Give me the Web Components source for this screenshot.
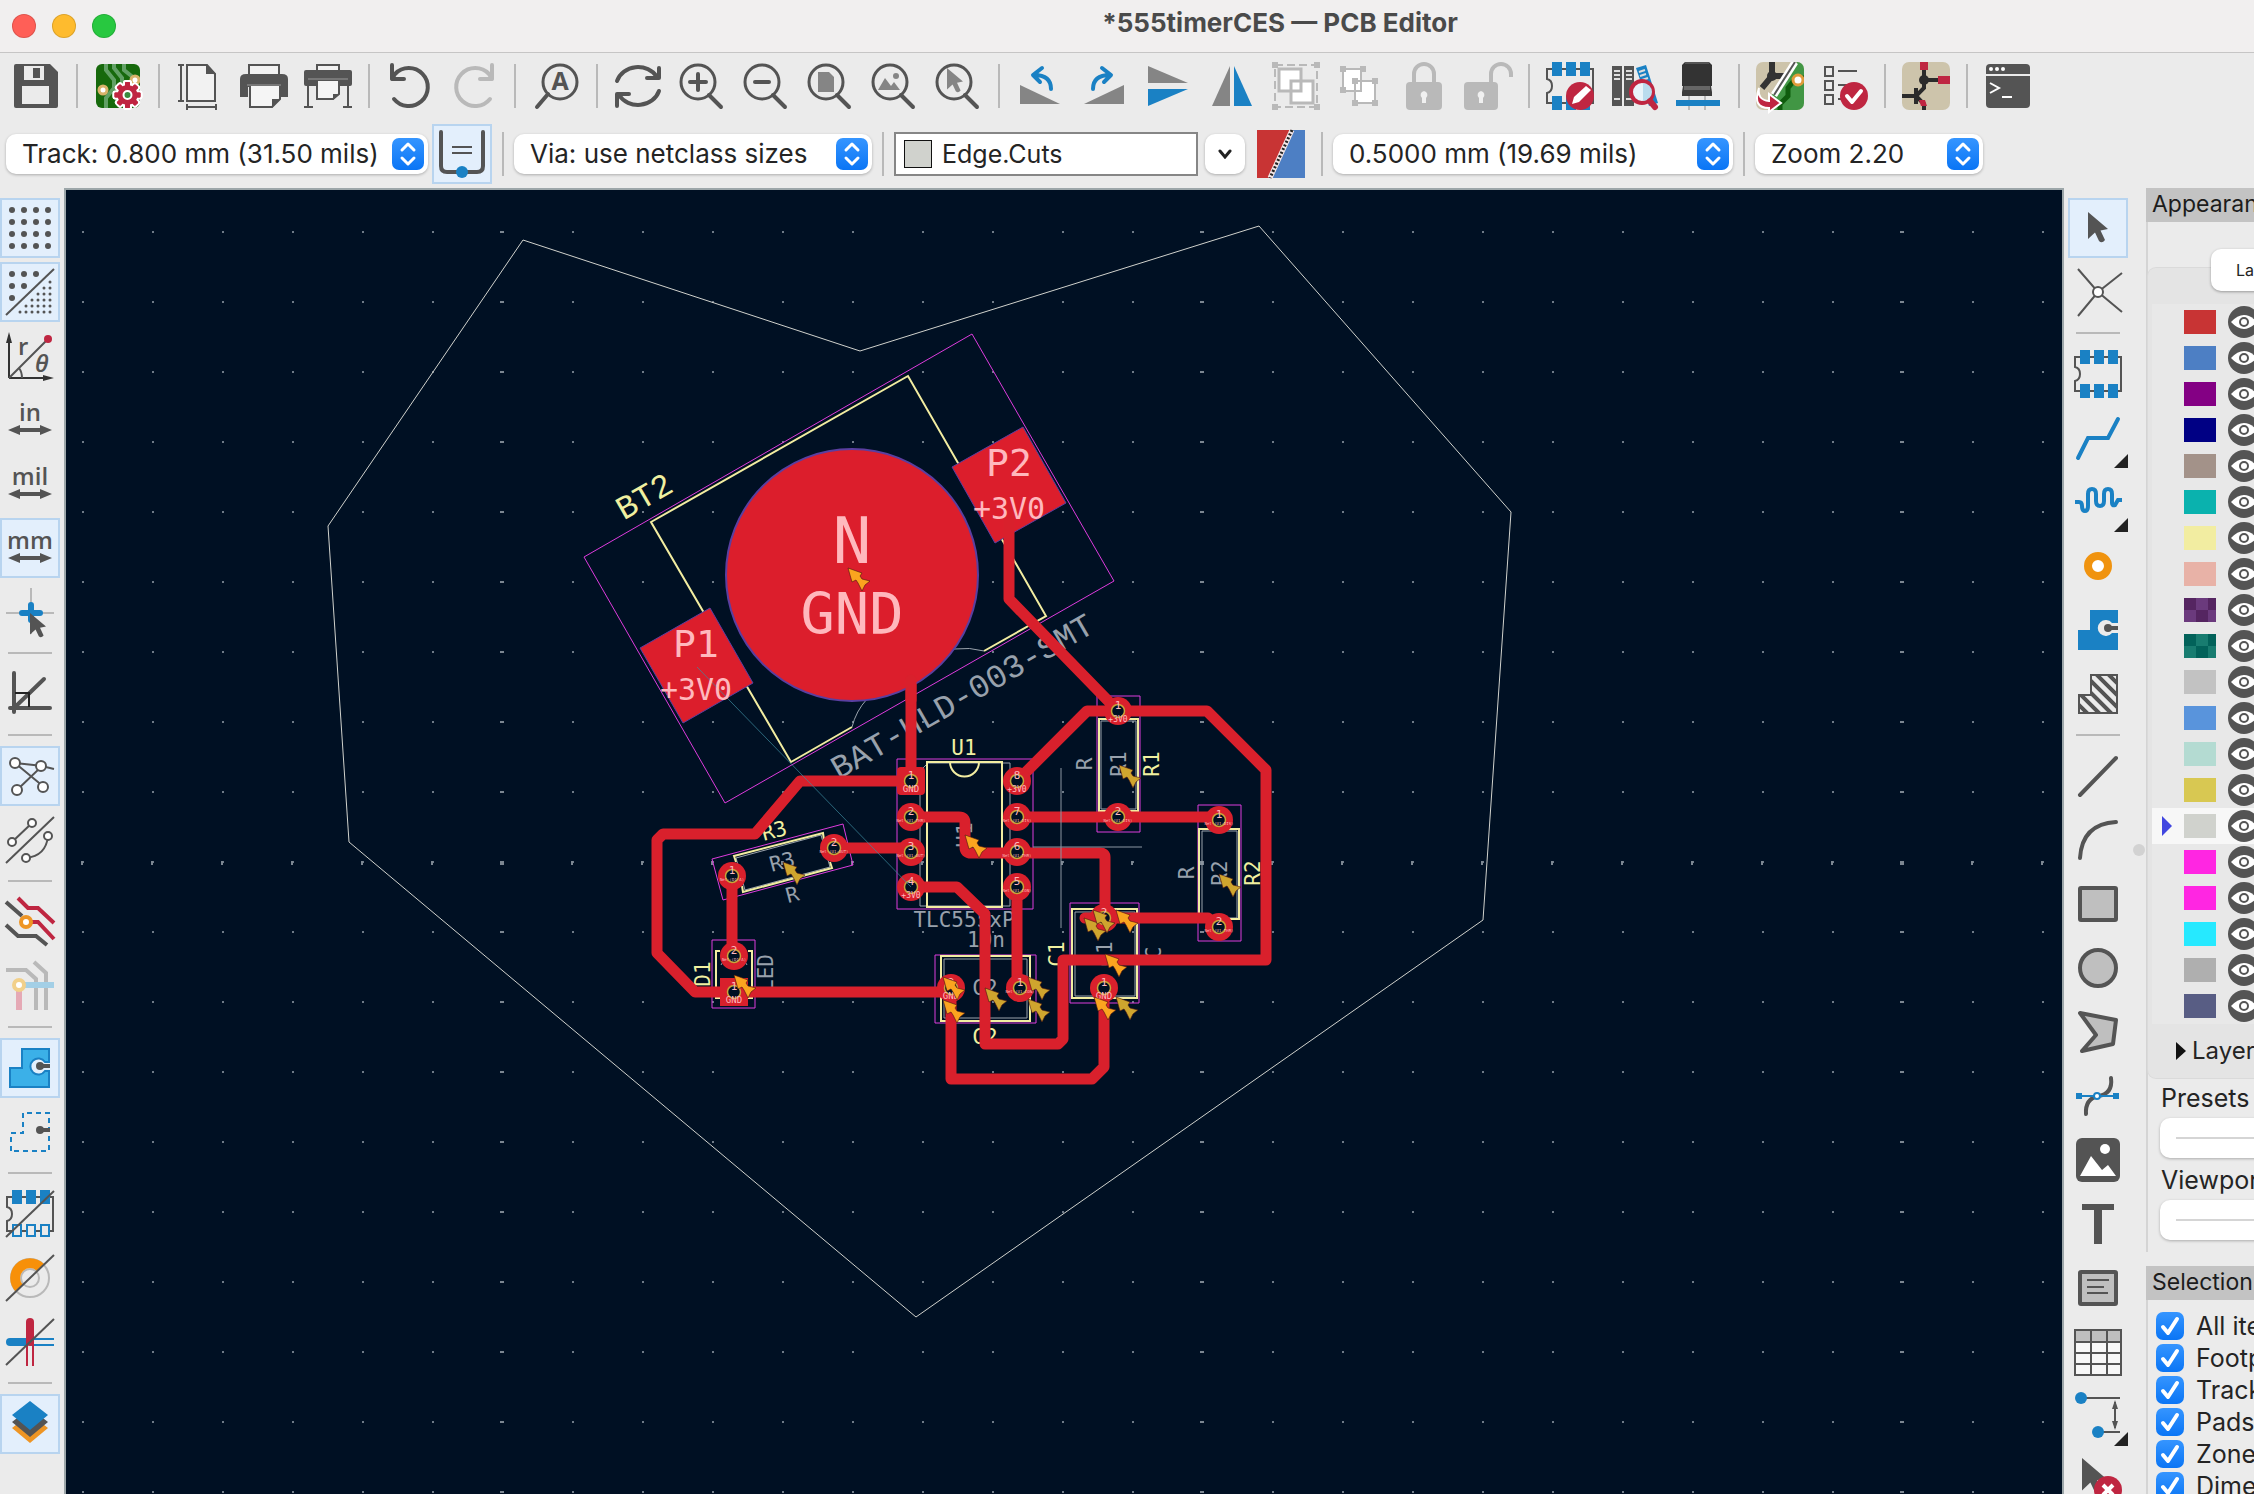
<!DOCTYPE html>
<html lang="en">
<head>
<meta charset="utf-8">
<title>*555timerCES — PCB Editor</title>
<style>
  html, body { margin: 0; height: 100%; }
  body { overflow: hidden; background: #ebebeb; color: #242424; font: 25px/32px Inter, "Liberation Sans", sans-serif; }
</style>
</head>
<body>
<pcb-window></pcb-window>
<script>
const D = '#545454', B = '#1a81c4', R = '#bf2641', L = '#b9b9b9', M = '#858585';
const lens = inner => `<circle cx="20" cy="20" r="17" fill="none" stroke="${D}" stroke-width="3"/><path d="M31 33L43 45" stroke="${D}" stroke-width="4" stroke-linecap="round"/>${inner}`;
const unit = t => `<text x="24" y="25" text-anchor="middle" font-family="Open Sans" font-weight="600" font-size="24" fill="${D}">${t}</text><path d="M12 34H36" stroke="${D}" stroke-width="4"/><path d="M2 34l12-5v10zM46 34l-12-5v10z" fill="${D}"/>`;
const grid = (n, step, x0, y0, r, keep) => { let s = ''; for (let i = 0; i < n; i++) for (let j = 0; j < n; j++) if (keep(i, j)) s += `<circle cx="${x0 + i * step}" cy="${y0 + j * step}" r="${r}" fill="${D}"/>`; return s; };
const slash = `<path d="M0 47L48 1" stroke="${D}" stroke-width="2"/>`;
const corner = `<path d="M60 46v14H46z" fill="#222"/>`;
const chip = low => `<path d="M1 7H47V41H1V31q5-1 5-7t-5-7z" fill="none" stroke="${D}" stroke-width="2"/><path d="M6 0h10v14H6zM20 0h10v14H20zM34 0h10v14H34z" fill="${B}"/>${low ? `<path d="M6 34h10v14H6zM20 34h10v14H20zM34 34h10v14H34z" fill="${B}"/>` : `<path d="M7 35h8v11H7zM21 35h8v11h-8zM35 35h8v11h-8z" fill="#ebebeb" stroke="${B}" stroke-width="2"/>`}`;
const cursor = (x, y, f, s) => `<path transform="translate(${x} ${y}) scale(${s})" d="M0 0V27L7 20.500 11 29q3 3 6-1L12.500 18.500 20 17z" fill="${f}"/>`;
const noteBox = `<rect x="6" y="8" width="36" height="32" rx="1" fill="#bfbfbf" stroke="${D}" stroke-width="4"/>`;
const gear = (() => { let p = ''; for (let i = 0; i < 8; i++) p += `<rect x="31" y="20" width="5" height="26" rx="1" transform="rotate(${i * 22.5 * 2} 33.5 33)"/>`; return p; })();
const zonePath = 'M4 43V24H16V5H43V18H39A8 8 0 1 0 39 27H43V43z';

const ICONS = {
  save: `<path d="M2 4q0-2 2-2h34l8 8v34q0 2-2 2H4q-2 0-2-2z" fill="${D}"/><path d="M12 4h20v14H12zM10 24h27v18H10z" fill="#ebebeb"/><path d="M21 6h7v10h-7z" fill="${D}"/>`,
  setup: `<clipPath id="c"><rect x="2" y="2" width="44" height="44" rx="6"/></clipPath><g clip-path="url(#c)"><path d="M2 2h44v44H2z" fill="#16690c"/><path d="M12 0v8l8 10v8l-8 10v12M20 0v6l8 10v10M30 0v8l10 8" fill="none" stroke="#61a065" stroke-width="4"/><circle cx="9" cy="28" r="4" fill="#fff" stroke="#d9b36a" stroke-width="3"/><circle cx="41" cy="18" r="4" fill="#fff" stroke="#d9b36a" stroke-width="3"/></g><g fill="#fff" stroke="#fff" stroke-width="4">${gear}</g><g fill="${R}">${gear}<circle cx="33.500" cy="33" r="10"/></g><circle cx="33.500" cy="33" r="4" fill="#3a8a3e" stroke="#fff" stroke-width="2"/>`,
  page: `<path d="M11 3H31L39 12V39H11z" fill="#f2f2f2" stroke="${D}" stroke-width="2"/><path d="M30 2L40 12H30z" fill="${D}"/><path d="M5 3V39M2 3h6M2 39h6M11 45H40M11 42v6M40 42v6" stroke="${D}" stroke-width="2"/>`,
  print: `<path d="M9 14V3H39V14" fill="#f2f2f2" stroke="${D}" stroke-width="2"/><path d="M0 35V17q0-5 6-5H42q6 0 6 5V35H40V25H8V35z" fill="${D}"/><path d="M10 24H40V37L32 45H10z" fill="#f5f5f5"/><path d="M10 24V45H32L40 37V24" fill="none" stroke="${D}" stroke-width="2"/><path d="M40 37L32 46V37z" fill="${D}"/><path d="M7 23H41" stroke="#777" stroke-width="2"/>`,
  plot: `<path d="M13 9V3H35V9" fill="#f2f2f2" stroke="${D}" stroke-width="2"/><rect y="8" width="48" height="16" rx="2" fill="${D}"/><path d="M4 24V45M44 24V45M0 45H9M39 45H48" stroke="${D}" stroke-width="2"/><path d="M13 18H35V32L29 37H13z" fill="#f5f5f5" stroke="${D}" stroke-width="2"/><path d="M35 32H29V38z" fill="${D}"/><path d="M4 17H44" stroke="#777" stroke-width="2"/>`,
  undo: `<path d="M8 37A19 19 0 1 0 9 12L6 17M6 3V17L18 17" fill="none" stroke="${D}" stroke-width="4" stroke-linejoin="round" stroke-linecap="round"/>`,
  redo: `<path d="M40 37A19 19 0 1 1 39 12L42 17M42 3V17L30 17" fill="none" stroke="${L}" stroke-width="4" stroke-linejoin="round" stroke-linecap="round"/>`,
  find: `<circle cx="28" cy="20" r="17" fill="none" stroke="${D}" stroke-width="3"/><path d="M16 32L5 45" stroke="${D}" stroke-width="4" stroke-linecap="round"/><text x="28" y="28" text-anchor="middle" font-family="Open Sans" font-weight="700" font-size="25" fill="${D}">A</text>`,
  refresh: `<path d="M3 19A22 20 0 0 1 43 15M45 6V16H33M45 29A22 20 0 0 1 5 33M3 44V32H15" fill="none" stroke="${D}" stroke-width="4" stroke-linejoin="round" stroke-linecap="round"/>`,
  zoomIn: lens(`<path d="M20 12V28M12 20H28" stroke="${D}" stroke-width="4" stroke-linecap="round"/>`),
  zoomOut: lens(`<path d="M13 20H27" stroke="${D}" stroke-width="4" stroke-linecap="round"/>`),
  zoomPage: lens(`<path d="M12 10H23L28 15V30H12z" fill="${M}"/>`),
  zoomObj: lens(`<path d="M8 28L15 16 21 24 24 20 30 28z" fill="${M}"/><circle cx="26" cy="14" r="3" fill="${M}"/>`),
  zoomSel: lens(cursor(13, 6, M, .8)),
  ccw: `<path d="M4 23L44 42H4z" fill="${M}"/><path d="M35 27Q35 13 18 13M26 6L17 13 24 20" fill="none" stroke="${B}" stroke-width="4" stroke-linecap="round" stroke-linejoin="round"/>`,
  cw: `<path d="M44 23L4 42H44z" fill="${M}"/><path d="M13 27Q13 13 30 13M22 6L31 13 24 20" fill="none" stroke="${B}" stroke-width="4" stroke-linecap="round" stroke-linejoin="round"/>`,
  flipV: `<path d="M4 4L44 21H4z" fill="${M}"/><path d="M4 27H44L4 44z" fill="${B}"/>`,
  flipH: `<path d="M22 4V44H4z" fill="${M}"/><path d="M26 4V44H44z" fill="${B}"/>`,
  group: `<rect x="3" y="3" width="42" height="42" fill="none" stroke="${L}" stroke-width="2" stroke-dasharray="8 4"/><path d="M0 0h6v6H0zM42 0h6v6h-6zM0 42h6v6H0zM42 42h6v6h-6z" fill="${L}"/><path d="M7 7H29V29H7zM19 19H41V41H19z" fill="#fff" stroke="${L}" stroke-width="3"/>`,
  ungroup: `<path d="M7 7H25V29H7zM19 19H39V41H19z" fill="#fff" stroke="${L}" stroke-width="2"/><path d="M4 4h6v6H4zM24 4h6v6h-6zM4 25h6v6H4zM16 16h6v6h-6zM36 16h6v6h-6zM16 38h6v6h-6zM36 38h6v6h-6z" fill="${L}"/>`,
  lock: `<rect x="6" y="20" width="36" height="28" rx="4" fill="${L}"/><path d="M14 21V12a10 10 0 0 1 20 0V21" fill="none" stroke="${L}" stroke-width="4"/><path d="M24 29a4 4 0 0 1 2 7v5h-4v-5a4 4 0 0 1 2-7z" fill="#f0f0f0"/>`,
  unlock: `<rect x="0" y="20" width="34" height="28" rx="4" fill="${L}"/><path d="M27 21V12a10 10 0 0 1 20 0V15" fill="none" stroke="${L}" stroke-width="4"/><path d="M17 29a4 4 0 0 1 2 7v5h-4v-5a4 4 0 0 1 2-7z" fill="#f0f0f0"/>`,
  fpEdit: chip(true) + `<circle cx="34" cy="34" r="14" fill="${R}"/><path d="M26 42l2-7 12-11 5 4-12 12z" fill="#fff"/>`,
  library: `<path d="M2 4h10v40H2zM14 4h10v40H14z" fill="${D}"/><path d="M4 9h6M4 13h6M4 17h6M16 9h6M16 13h6M16 17h6M4 37h6M16 37h6" stroke="#ddd" stroke-width="2"/><path d="M26 6l10-3 12 38-9 3z" fill="${B}"/><path d="M29 10l6-2M30 14l6-2M32 18l6-2" stroke="#ddd" stroke-width="2"/><circle cx="32" cy="30" r="11" fill="#e8f4fa" stroke="${R}" stroke-width="4"/><path d="M33 21a9 9 0 0 1 0 18z" fill="#b9dcee"/><path d="M40 39L45 45" stroke="${R}" stroke-width="6" stroke-linecap="round"/>`,
  view3d: `<path d="M8 3L11 0H35L38 3V24H8z" fill="#333"/><path d="M9 24H37L38 30V34H8V30z" fill="#3c3c3c"/><path d="M10 24H36V28H10z" fill="#666"/><path d="M11 1H35" stroke="#555" stroke-width="2"/><path d="M15 34V48M31 34V48" stroke="#bbb" stroke-width="2"/><path d="M2 38H46V44H2z" fill="${B}"/>`,
  update: `<clipPath id="c"><rect width="48" height="48" rx="7"/></clipPath><g clip-path="url(#c)"><path d="M0 0h48v48H0z" fill="#cdc4ab"/><path d="M16 0V14L6 26M16 14H28" stroke="#333" stroke-width="6" fill="none"/><circle cx="16" cy="14" r="5" fill="#333"/><path d="M41 0H48V48H12V38z" fill="#419644"/><path d="M48 16H40l-8 10v8l-8 8v8" fill="none" stroke="#0f5c0d" stroke-width="5"/><circle cx="42" cy="18" r="5" fill="#fff" stroke="#e09b3c" stroke-width="3"/><path d="M39 0L18 33" stroke="#fff" stroke-width="7"/><path d="M39 0L18 33" stroke="#555" stroke-width="2"/></g><path d="M3 26Q1 38 13 39V32L25 41 13 50V46Q-4 46 3 26z" fill="${R}" stroke="#fff" stroke-width="2"/>`,
  drc: `<path d="M5 5h8v9H5zM5 19h8v9H5zM5 33h8v9H5z" fill="none" stroke="${D}" stroke-width="2"/><path d="M18 9H37M18 23H30M18 37H22" stroke="${D}" stroke-width="2"/><circle cx="34" cy="34" r="14" fill="${R}"/><path d="M27 34l5 6 9-11" fill="none" stroke="#fff" stroke-width="4" stroke-linecap="round" stroke-linejoin="round"/>`,
  schematic: `<rect width="48" height="48" rx="7" fill="#cdc4ab"/><path d="M22 6V26L14 34M22 18H40M0 34H14M14 26V42M14 34L22 42V48" fill="none" stroke="#2b2b2b" stroke-width="4"/><circle cx="22" cy="18" r="5" fill="#2b2b2b"/><path d="M18 0h8v8h-8zM36 14h12v8H36zM17 38l6 0 2 6-6 0z" fill="${R}"/>`,
  terminal: `<rect x="2" y="2" width="44" height="44" rx="4" fill="${D}"/><path d="M2 13H46" stroke="#ebebeb" stroke-width="2"/><circle cx="7" cy="7" r="2" fill="#fff"/><circle cx="13" cy="7" r="2" fill="#fff"/><circle cx="19" cy="7" r="2" fill="#fff"/><path d="M6 21l9 5-9 5M18 35H28" fill="none" stroke="#fff" stroke-width="2"/>`,
  width: `<path d="M3 2V36Q3 42 9 42H39Q45 42 45 36V2" fill="none" stroke="${D}" stroke-width="4" stroke-linecap="round"/><path d="M14 17H34M14 23H34" stroke="${D}" stroke-width="2"/><circle cx="24" cy="42" r="6" fill="${B}"/>`,
  pair: `<path d="M0 0H36L12 48H0z" fill="#c83434"/><path d="M36 0H48V48H12z" fill="#4d7fc4"/><path d="M35 0L13 48" stroke="#f4e6e6" stroke-width="5"/><path d="M35 0L13 48" stroke="#222" stroke-width="3" stroke-dasharray="2 2"/>`,
  dots: grid(4, 12, 6, 6, 3, () => true),
  dotsOver: grid(3, 12, 6, 6, 3, (i, j) => i + j < 3) + grid(6, 6, 14, 14, 1.5, (i, j) => i + j > 4) + slash,
  polar: `<path d="M3 46V8M3 46H40" stroke="#333" stroke-width="2" fill="none"/><path d="M3 0l3 11H0zM48 46l-11 3v-6z" fill="#333"/><path d="M3 46L41 8M13 36Q16 40 16 46" fill="none" stroke="${D}" stroke-width="2"/><circle cx="42" cy="7" r="4" fill="${R}"/><text x="12" y="23" font-family="Open Sans" font-weight="600" font-size="24" fill="${D}">r</text><text x="29" y="40" font-family="Open Sans" font-style="italic" font-weight="600" font-size="24" fill="${D}">θ</text>`,
  inch: unit('in'), mil: unit('mil'), mm: unit('mm'),
  cross: `<path d="M0 25H48M25 0V46" stroke="${L}" stroke-width="2"/><path d="M16 25H34M25 17V32" stroke="${B}" stroke-width="6" stroke-linecap="round"/>` + cursor(24, 25, D, .8),
  angle: `<path d="M8 38L38 9M8 3V42M4 38H44" stroke="${D}" stroke-width="4" stroke-linecap="round"/><path d="M9 23H23V37" fill="none" stroke="#222" stroke-width="2"/>`,
  rats: `<path d="M9 11L37 14M9 11L38 35M11 38L36 14 48 17" stroke="${D}" stroke-width="2" fill="none"/><g fill="#fff" stroke="${D}" stroke-width="2"><circle cx="9" cy="11" r="5"/><circle cx="35" cy="14" r="5"/><circle cx="11" cy="38" r="5"/><circle cx="37" cy="35" r="5"/></g>`,
  rats2: `<path d="M6 26L26 7M42 20Q40 40 20 42M0 47L48 1" stroke="${D}" stroke-width="2" fill="none"/><g fill="#fff" stroke="${D}" stroke-width="2"><circle cx="26" cy="7" r="4"/><circle cx="6" cy="26" r="4"/><circle cx="20" cy="42" r="4"/><circle cx="42" cy="20" r="4"/></g>`,
  netHi: `<path d="M0 4L16 18M0 27L12 38H30L41 47" fill="none" stroke="${D}" stroke-width="4"/><path d="M12 0L22 10H32L48 25M26 24H32L48 41" fill="none" stroke="${R}" stroke-width="4"/><circle cx="20" cy="24" r="5" fill="#fff" stroke="#ee9524" stroke-width="4"/>`,
  dim: `<path d="M0 8H20L30 17V48M28 0L40 11V48" fill="none" stroke="${L}" stroke-width="4"/><path d="M18 23H48" stroke="#a3cfe6" stroke-width="6"/><path d="M13 28V48" stroke="#e5a9b5" stroke-width="6"/><circle cx="13" cy="23" r="5" fill="#fff" stroke="#f2d08a" stroke-width="4"/>`,
  zoneFill: `<path d="${zonePath}" fill="#3bb0e8" stroke="${B}" stroke-width="2"/><path d="M34 22H44" stroke="${D}" stroke-width="4"/><circle cx="34" cy="22" r="4" fill="${D}"/>`,
  zoneLine: `<path d="M5 43V25H17V5H43V43z" fill="none" stroke="${B}" stroke-width="2" stroke-dasharray="5 4"/><path d="M34 22H44" stroke="${D}" stroke-width="4"/><circle cx="34" cy="22" r="4" fill="${D}"/>`,
  padsOut: chip(false) + slash,
  viaOut: `<circle cx="24" cy="24" r="19" fill="none" stroke="${L}" stroke-width="2"/><circle cx="24" cy="24" r="9" fill="none" stroke="${L}" stroke-width="2"/><path d="M10 38A19 19 0 1 1 38 10L31 17A9 9 0 1 0 17 31z" fill="#f79009"/>` + slash,
  trackOut: `<path d="M4 24H20" stroke="${B}" stroke-width="8" stroke-linecap="round"/><path d="M24 21H48M24 27H48" stroke="${B}" stroke-width="2"/><path d="M24 4V24" stroke="${R}" stroke-width="8" stroke-linecap="round"/><path d="M21 24V48M27 24V48" stroke="${R}" stroke-width="2"/>` + slash,
  layers: `<path d="M24 14L42 28 24 43 6 28z" fill="#ee9524" /><path d="M24 8L42 22 24 37 6 22z" fill="${D}"/><path d="M24 1L42 15 24 30 6 15z" fill="${B}"/>`,
  pointer: cursor(14, 8, D, 1),
  local: `<path d="M4 1L24 24 4 48M48 5L24 24 48 44" fill="none" stroke="${D}" stroke-width="2"/><circle cx="24" cy="24" r="5" fill="#fff" stroke="${D}" stroke-width="2"/>`,
  chip: chip(true),
  route: `<path d="M4 44L14 24H34L44 5" fill="none" stroke="${B}" stroke-width="4" stroke-linecap="round"/>`,
  tune: `<path d="M1 24H5Q8 24 8 28 8 33 11 33 14 33 14 28V16Q14 11 18 11 22 11 22 16V23Q22 28 26 28 30 28 30 23V16Q30 11 34 11 38 11 38 16V25Q38 28 41 27L44 22H48" fill="none" stroke="${B}" stroke-width="4"/>`,
  via: `<circle cx="24" cy="24" r="10" fill="#fff" stroke="#f0930f" stroke-width="8"/>`,
  zone: `<path d="M4 44V24H16V4H44V17H38A8 8 0 1 0 38 27H44V44z" fill="${B}"/><path d="M34 22H44" stroke="${D}" stroke-width="4"/><circle cx="34" cy="22" r="4" fill="${D}"/>`,
  rule: `<clipPath id="c"><path d="M5 43V25H17V5H43V43z"/></clipPath><path clip-path="url(#c)" d="M-6 24L24 54M2 20L34 52M8 14L44 50M10 4L50 44M20 2L50 32M32 2L50 20" stroke="${D}" stroke-width="4"/><path d="M5 43V25H17V5H43V43z" fill="none" stroke="${D}" stroke-width="2"/>`,
  line: `<path d="M6 43L42 6" stroke="${D}" stroke-width="4" stroke-linecap="round"/>`,
  arc: `<path d="M6 42Q8 8 42 6" fill="none" stroke="${D}" stroke-width="4" stroke-linecap="round"/>`,
  rect: noteBox,
  circle: `<circle cx="24" cy="24" r="18" fill="#bfbfbf" stroke="${D}" stroke-width="4"/>`,
  poly: `<path d="M6 5L42 12 39 36 8 43 22 27z" fill="#bfbfbf" stroke="${D}" stroke-width="4" stroke-linejoin="round"/>`,
  bezier: `<path d="M37 6Q39 22 24 24 11 27 12 42" fill="none" stroke="${D}" stroke-width="4" stroke-linecap="round"/><path d="M4 24H44" stroke="${B}" stroke-width="2"/><path d="M2 21h6v6H2zM39 21h6v6h-6z" fill="${B}"/><circle cx="23" cy="24" r="3" fill="#fff" stroke="${B}" stroke-width="2"/>`,
  image: `<rect x="2" y="2" width="44" height="44" rx="6" fill="${D}"/><path d="M6 40L17 20 28 34 34 29 42 40z" fill="#fff"/><circle cx="31" cy="13" r="5" fill="#fff"/>`,
  text: `<path d="M8 4H40V10H28V44H20V10H8z" fill="${D}"/>`,
  textbox: noteBox + `<path d="M13 16H35M13 23H30M13 29H34" stroke="${D}" stroke-width="2"/>`,
  table: `<path d="M1 2H47V47H1z" fill="#f7f7f7"/><path d="M1 2H47V14H1z" fill="#bfbfbf"/><path d="M1 2H47V47H1zM1 14H47M1 25H47M1 36H47M17 2V47M33 2V47" fill="none" stroke="${D}" stroke-width="2"/>`,
  dimension: `<path d="M7 6H46M24 40H46M41 10V36" stroke="${D}" stroke-width="2"/><path d="M41 8l3 9h-6zM41 38l3-9h-6z" fill="${D}"/><circle cx="7" cy="6" r="6" fill="${B}"/><circle cx="24" cy="40" r="6" fill="${B}"/>`,
  remove: cursor(8, 2, D, 1.2) + `<circle cx="34" cy="34" r="14" fill="${R}"/><path d="M29 29l10 10M39 29L29 39" stroke="#fff" stroke-width="4"/>`
};

/* Attaches an open shadow root and fills it with markup. */
class Part extends HTMLElement {
  constructor() { super(); this.attachShadow({ mode: 'open' }); }
  connectedCallback() { this.shadowRoot.innerHTML = `<style>*{box-sizing:border-box}${this.css()}</style>${this.html()}`; }
}

customElements.define('tool-button', class extends Part {
  css() { return `:host{display:block;flex:none}
    button{display:grid;width:60px;height:60px;padding:0;border:0;background:none;place-items:center}
    :host([pressed]) button{background:#e3effc;border:2px solid #b8d4ef}
    svg{width:48px;height:48px;overflow:visible;grid-area:1/1}
    svg.tip{width:60px;height:60px}`; }
  html() { const n = this.getAttribute('icon');
    return `<button type="button" aria-label="${n}"><svg viewBox="0 0 48 48" aria-hidden="true">${ICONS[n]}</svg>${this.hasAttribute('more') ? `<svg class="tip" viewBox="0 0 60 60" aria-hidden="true">${corner}</svg>` : ''}</button>`; }
});

customElements.define('tool-gap', class extends Part {
  css() { return `:host{display:block;flex:none;width:14px;height:44px;padding:0 6px}
    i{display:block;height:100%;background:#b9b9b9}
    :host([flat]){width:60px;height:14px;padding:6px 8px}`; }
  html() { return '<i></i>'; }
});

customElements.define('pick-list', class extends Part {
  css() { return `:host{display:grid;flex:none;height:40px;align-items:center;font-size:26px}
    select{grid-area:1/1;appearance:none;width:100%;height:40px;border:0;border-radius:10px;background:#fff;padding:0 16px;font:inherit;color:inherit;box-shadow:0 1px 3px #0004}
    svg{grid-area:1/1;justify-self:end;width:32px;height:32px;margin-right:4px;pointer-events:none}
    hr{grid-area:1/1;width:calc(100% - 32px);height:2px;margin:0 16px;border:0;background:#d5d5d5;pointer-events:none}`; }
  html() { const v = this.getAttribute('value') || '';
    return `<select aria-label="${this.getAttribute('name')}"><option>${v}</option></select>` + (v ? '' : '<hr>') +
    `<svg viewBox="0 0 32 32" aria-hidden="true"><defs><linearGradient id="g" x2="0" y2="1"><stop stop-color="#3595ff"/><stop offset="1" stop-color="#0a75f5"/></linearGradient></defs><rect width="32" height="32" rx="7" fill="url(#g)"/><path d="M10 12l6-6 6 6M10 20l6 6 6-6" fill="none" stroke="#fff" stroke-width="3" stroke-linecap="round" stroke-linejoin="round"/></svg>`; }
});

customElements.define('layer-picker', class extends Part {
  css() { return `:host{display:flex;flex:none;align-items:center;gap:7px}
    label{display:grid;width:304px;height:44px;align-items:center}
    select{grid-area:1/1;appearance:none;width:100%;height:44px;border:2px solid #868686;border-radius:0;background:#fff;padding:0 0 0 46px;font:inherit;color:inherit}
    i{grid-area:1/1;width:28px;height:28px;margin-left:10px;background:#d0d2cd;border:1px solid #111;pointer-events:none}
    button{width:40px;height:40px;padding:0;border:0;border-radius:10px;background:#fff;box-shadow:0 1px 3px #0004;display:grid;place-items:center}`; }
  html() { return `<label><select aria-label="Active layer"><option>Edge.Cuts</option></select><i></i></label>
    <button type="button" aria-label="Show layers"><svg width="14" height="10" viewBox="0 0 14 10"><path d="M2 2l5 6 5-6" fill="none" stroke="#222" stroke-width="3" stroke-linecap="round"/></svg></button>`; }
});

customElements.define('title-bar', class extends Part {
  css() { return `:host{display:grid;flex:none;grid-template:52px / 1fr;align-items:center;background:#f1efef;border-bottom:1px solid #c6c5c5}
    div{grid-area:1/1;display:flex;gap:16px;padding-left:12px;height:48px;align-items:center}
    i{width:24px;height:24px;border-radius:50%;box-shadow:inset 0 0 0 1px #0002}
    h1{grid-area:1/1;margin:0 0 6px;padding-left:306px;text-align:center;font-size:26px;line-height:32px;font-weight:700;color:#4a4a4a}`; }
  html() { return '<div><i style="background:#ff5f57"></i><i style="background:#febb2e"></i><i style="background:#28c840"></i></div><h1><slot></slot></h1>'; }
});

customElements.define('layer-row', class extends Part {
  css() { return `:host{display:flex;height:36px;align-items:center;padding-left:32px;gap:12px}
    :host([active]){background:#f7f7f7;padding-left:10px}
    svg.mark{width:10px;height:20px}
    i{width:32px;height:24px}
    button{width:32px;height:32px;padding:0;border:0;background:none} button svg{display:block}`; }
  html() { const c = this.getAttribute('color'), d = this.getAttribute('alt');
    return (this.hasAttribute('active') ? '<svg class="mark" viewBox="0 0 10 20"><path d="M0 0L10 10 0 20z" fill="#4146e0"/></svg>' : '') +
    `<i style="background:${d ? `repeating-conic-gradient(${d} 0 25%,${c} 0 50%) -12px 0/24px 24px` : c}"></i><button type="button" aria-label="Toggle layer"><svg width="32" height="32" viewBox="0 0 32 32"><circle cx="16" cy="16" r="16" fill="#545454"/><path d="M3 16Q16 2 29 16 16 30 3 16z" fill="#fff"/><circle cx="16" cy="16" r="4" fill="#fff" stroke="#545454" stroke-width="2"/></svg></button>`; }
});

customElements.define('check-item', class extends Part {
  css() { return `:host{display:block;height:32px}
    label{display:grid;grid-template-columns:28px auto;column-gap:12px;height:32px;align-items:center;justify-content:start;white-space:nowrap}
    input{grid-area:1/1;appearance:none;width:28px;height:28px;margin:0;border-radius:7px;background:linear-gradient(#3595ff,#0a75f5)}
    svg{grid-area:1/1;pointer-events:none}`; }
  html() { return `<label><input type="checkbox" checked><svg width="28" height="28" viewBox="0 0 28 28"><path d="M7 15l5 6 9-14" fill="none" stroke="#fff" stroke-width="4" stroke-linecap="round" stroke-linejoin="round"/></svg><span><slot></slot></span></label>`; }
});

customElements.define('side-panel', class extends Part {
  css() { return `:host{display:block;flex:none;width:108px;overflow:hidden;white-space:nowrap}
    .in{width:360px}
    h2{margin:0;height:34px;padding-left:6px;background:#c3c3c3;font-size:23px;line-height:32px;font-weight:400;color:#1c1c1c}
    .body{border-left:2px solid #d4d4d4;height:1030px;padding-top:46px}
    .book{background:#e4e4e4;border-radius:8px;height:810px;box-shadow:0 0 0 1px #dadada}
    .tab{display:block;height:42px;margin:0 0 0 63px;padding:0 25px;border:0;border-radius:10px;background:#fff;box-shadow:0 1px 3px #0005;font:16px/40px Inter,sans-serif;color:inherit;transform:translateY(-19px)}
    .rows{margin:-6px 0 0 4px;background:#e8e8e8}
    .more{display:flex;align-items:center;gap:6px;height:54px;padding:0 0 0 28px;border:0;background:none;font:inherit;font-size:24px;color:inherit}
    .body>label{display:block;height:40px;padding:4px 0 0 13px}
    pick-list{margin-left:12px}
    .body>label.next{margin-top:2px}
    .filter{border-left:2px solid #d4d4d4;padding:10px 0 0 8px}
    h2.f{margin-top:14px}`; }
  html() {
    const rows = ['#c83434', '#4d7fc4', '#840084', '#000084', '#a39289', '#0ab2ae', '#f2eda1', '#e8b2a7', '#6b3a7d|#552561', '#187c70|#02625a', '#c2c2c2', '#5994dc', '#b4dbd2', '#d8c852', '#d0d2cd', '#ff26e2', '#ff26e2', '#26e9ff', '#afafaf', '#585d84'];
    return `<div class="in"><h2>Appearance</h2><div class="body"><div class="book"><button class="tab" type="button">Layers</button>
      <div class="rows">${rows.map((r, i) => { const [c, a] = r.split('|'); return `<layer-row color="${c}"${a ? ` alt="${a}"` : ''}${i === 14 ? ' active' : ''}></layer-row>`; }).join('')}</div>
      <button class="more" type="button"><svg width="10" height="18" viewBox="0 0 10 18"><path d="M0 0L10 9 0 18z" fill="#111"/></svg>Layer</button></div>
      <label>Presets</label><pick-list name="Presets"></pick-list><label class="next">Viewports</label><pick-list name="Viewports"></pick-list></div>
      <h2 class="f">Selection</h2><div class="filter">${['All items', 'Footprints', 'Tracks', 'Pads', 'Zones', 'Dimensions'].map(t => `<check-item>${t}</check-item>`).join('')}</div></div>`;
  }
});

/* The board drawing: everything is placed in window coordinates, then shifted to the canvas corner. */
customElements.define('board-canvas', class extends Part {
  css() { return `:host{display:block;flex:1;min-width:0;overflow:hidden;background:#001023;border:2px solid #9ca6a9;border-bottom:0}
    svg{display:block;width:100%;height:100%}
    text{font-family:"DejaVu Sans Mono",monospace;text-anchor:middle}
    .thin{font-family:"Liberation Mono",monospace;font-size:33px}
    .t{fill:none;stroke:#d9202c;stroke-width:11;stroke-linecap:round;stroke-linejoin:round}
    .m{fill:none;stroke:#dd3cdd;stroke-width:1}
    .y{fill:none;stroke:#f2eda1;stroke-width:2}
    .g{fill:none;stroke:#9aa3ad;stroke-width:1}
    .ty{fill:#f0f0a0;font-size:21px} .tg{fill:#98a1ac;font-size:21px}
    .p{fill:#ffb8bd}`; }
  html() {
    const turn = (x, y, a, cls, t) => `<text class="${cls}" transform="translate(${x} ${y}) rotate(${a})" y="8">${t}</text>`;
    const pad = (x, y, n, net, sq) => `${sq === undefined ? `<circle cx="${x}" cy="${y}" r="14" fill="#d9202c"/>` : `<rect x="${x - 14}" y="${y - 14}" width="28" height="28" rx="${sq}" fill="#d9202c"/>`}
      <circle cx="${x}" cy="${y}" r="6.500" fill="#001023" stroke="#c9a53a" stroke-width="1.500"/>
      <text class="p" x="${x}" y="${y - 2}" font-size="11">${n}</text><text class="p" x="${x}" y="${net.length > 4 ? y + 5 : y + 11}" font-size="${net.length > 4 ? 4 : net.length > 3 ? 8 : 9}">${net}</text>`;
    const arrow = (x, y, dim) => `<path transform="translate(${x} ${y})" d="M0 0L14 5 12 8 14 11 22 13 17 17 14 23 10 15 8 12 4 14z" fill="${dim ? '#cfa52e' : '#fba41f'}" stroke="#4a1410" stroke-width=".6"/>`;
    const tracks = ['M911 670V781', 'M911 781H800L755 834H663L657 840V953L695 992H945L951 988', 'M732 876V956', 'M834 848H911', 'M911 817H959Q965 817 965 823V847Q965 853 971 853H1100Q1105 853 1105 857V918', 'M1017 817H1219', 'M1017 781L1087 711H1207L1266 770V960H1063V1039L1058 1044H985V914L957 887H911', 'M1017 887V988', 'M951 988V1079H1092L1104 1067V988', 'M1085 918H1208L1219 927', 'M1009 510V599L1118 711'];
    return `<svg role="img" aria-label="Board"><defs>
      <pattern id="a" width="70" height="70" x="82" y="231" patternUnits="userSpaceOnUse"><rect width="2" height="2" fill="#6f7b88"/></pattern>
      <pattern id="b" width="700" height="700" x="500" y="161" patternUnits="userSpaceOnUse"><path d="${Array.from({ length: 10 }, (_, i) => `M0 ${i * 70}h4v2h-4zM${i * 70 + 1} 0h2v4h-2z`).join('')}M0 0h4v4h-4z" fill="#7c8792"/></pattern></defs>
    <g transform="translate(-66 -190)">
      <rect x="66" y="190" width="4000" height="3000" fill="url(#a)"/><rect x="66" y="190" width="4000" height="3000" fill="url(#b)"/>
      <path d="M523 240L860 351 1259 226 1511 512 1483 920 916 1317 349 842 328 526z" fill="none" stroke="#d0d2cd"/>
      <path class="m" d="M972 334L1114 581 725 803 584 557z"/>
      <path class="y" d="M852 727L791 762 651 522 908 376 1046 616 984 651"/>
      <path class="g" d="M852 727Q856 711 867 699M984 651Q970 647 954 649"/>
      <text class="thin" fill="#f0f0a0" transform="translate(644 496) rotate(-30)" y="11">BT2</text>
      <text class="thin" fill="#98a1ac" transform="translate(962 696) rotate(-30)" y="11">BAT-HLD-003-SMT</text>
      <path class="m" d="M897 759H1033V909H897zM1097 696h43v136h-43zM1198 805h43v136h-43zM1070 903h69v100h-69zM935 955h101v68h-101zM712 940h43v68h-43zM712 859L843 824 853 865 723 900z"/>
      <path class="g" d="M928 763H1010V906H920V771zM1101 721h35v88h-35zM1202 831h35v87h-35zM1075 912h60v84h-60zM944 959h83v59h-83zM736 858L821 835 830 867 745 890zM721 965a14 14 0 0 1 26 0M721 985a14 14 0 0 0 26 0"/>
      <path class="y" d="M950 762H927V907H1002V762H979M950 762A14.500 14.500 0 0 0 979 762zM1099 719h39v92h-39zM1199 829h40v90h-40zM1072 909h65v89h-65zM941 956h89v65h-89zM720 951H716V998H720M748 951H752V998H748M736 862L734 856 823 833 824 840M742 886L743 892 832 868 830 862"/>
      ${turn(964, 835, -90, 'tg', 'U1')}
      <text class="ty" x="964" y="755">U1</text><text class="tg" x="964" y="927">TLC555xP</text><text class="tg" x="986" y="947">10n</text>
      ${turn(1084, 764, -90, 'tg', 'R')}${turn(1118, 764, -90, 'tg', 'R1')}${turn(1151, 764, -90, 'ty', 'R1')}
      ${turn(1186, 873, -90, 'tg', 'R')}${turn(1219, 873, -90, 'tg', 'R2')}${turn(1252, 873, -90, 'ty', 'R2')}
      ${turn(1056, 954, -90, 'ty', 'C1')}${turn(1104, 954, -90, 'tg', 'C1')}${turn(1153, 953, -90, 'tg', 'C')}
      <text class="tg" x="985" y="995">C2</text><text class="ty" x="985" y="1044">C2</text>
      ${turn(774, 830, -15, 'ty', 'R3')}${turn(782, 861, -15, 'tg', 'R3')}${turn(792, 894, -15, 'tg', 'R')}
      ${turn(702, 974, -90, 'ty', 'D1')}${turn(765, 973, -90, 'tg', 'LED')}
      <path d="M710 608L753 683 683 723 640 648zM1023 427L1066 503 995 543 952 467z" fill="#dc1e2c" stroke="#5a3fa0"/>
      <path class="t" d="${tracks.join('')}"/>
      <circle cx="852" cy="575" r="126" fill="#dc1e2c" stroke="#5a3fa0" stroke-width="2"/>
      <path d="M911 680V700" class="t"/>
      <path d="M1061 768V928M1033 847H1142" stroke="#8b96a3" stroke-width="1"/>
      ${pad(911, 781, 1, 'GND', 4)}${pad(911, 817, 2, 'Net-(U1-THR)')}${pad(911, 852, 3, 'Net-(U1-OUT)')}${pad(911, 887, 4, '+3V0')}
      ${pad(1017, 887, 5, 'Net-(U1-CON)')}${pad(1017, 852, 6, 'Net-(U1-THR)')}${pad(1017, 817, 7, 'Net-(U1-DIS)')}${pad(1017, 781, 8, '+3V0')}
      ${pad(1118, 711, 1, '+3V0')}${pad(1118, 817, 2, 'Net-(U1-DIS)')}${pad(1219, 820, 1, 'Net-(U1-DIS)')}${pad(1219, 927, 2, 'Net-(U1-THR)')}
      ${pad(1104, 918, 2, '')}${pad(1104, 988, 1, 'GND')}${pad(951, 988, 2, 'GND')}${pad(1020, 988, 1, 'Net-(U1-CON)')}
      ${pad(732, 876, 1, 'Net-(D1-A)')}${pad(834, 848, 2, 'Net-(U1-OUT)')}${pad(734, 956, 2, 'Net-(D1-A)')}${pad(734, 992, 1, 'GND', 0)}
      <path d="M697 667L911 887" stroke="#3c8ca0" stroke-opacity=".7"/>
      <g class="p"><text x="852" y="563" font-size="64">N</text><text x="852" y="634" font-size="57">GND</text>
      <text x="1009" y="476" font-size="38">P2</text><text x="1009" y="519" font-size="30">+3V0</text><text x="696" y="657" font-size="38">P1</text><text x="696" y="700" font-size="30">+3V0</text></g>
      ${arrow(848, 568)}${arrow(965, 835)}${arrow(783, 862, 1)}${arrow(734, 975)}${arrow(1119, 765, 1)}${arrow(1219, 874, 1)}${arrow(1105, 954)}
      ${arrow(985, 988, 1)}${arrow(943, 977)}${arrow(943, 1000)}${arrow(1028, 977, 1)}${arrow(1028, 999, 1)}${arrow(1084, 918, 1)}${arrow(1093, 910, 1)}${arrow(1116, 910)}${arrow(1094, 997)}${arrow(1116, 997, 1)}
    </g></svg>`;
  }
});

/* Toolbar contents: "|" is a divider, "*" marks a pressed tool, "+" one with a submenu. */
const tools = (list, flat) => list.split(' ').map(n => n === '|' ? `<tool-gap${flat ? ' flat' : ''}></tool-gap>` : `<tool-button icon="${n.replace(/[*+]/, '')}"${n.includes('*') ? ' pressed' : ''}${n.includes('+') ? ' more' : ''}></tool-button>`).join('');

customElements.define('pcb-window', class extends Part {
  css() { return `:host{display:flex;flex-direction:column;height:100vh;overflow:hidden}
    .row{display:flex;flex:none;align-items:center;gap:4px;height:60px;padding:0 6px;margin:3px 0 0}
    .row+.row{margin:8px 0 4px}
    main{display:flex;flex:1;min-height:0}
    nav{display:flex;flex:none;flex-direction:column;gap:4px;width:64px;padding-top:10px;overflow:hidden}
    nav.r{padding-left:4px}
    .sash{flex:none;width:18px;display:grid;place-items:center;padding:18px 0 0 4px}
    .sash i{width:12px;height:12px;border-radius:50%;background:#d2d2d2}
    .w1{width:422px}.w2{width:358px}.w3{width:400px}.w4{width:228px}
    .swap{margin-left:2px}`; }
  html() { return `<title-bar>*555timerCES — PCB Editor</title-bar>
    <div class="row">${tools('save | setup | page print plot | undo redo | find | refresh zoomIn zoomOut zoomPage zoomObj zoomSel | ccw cw flipV flipH group ungroup lock unlock | fpEdit library view3d | update drc | schematic | terminal')}</div>
    <div class="row"><pick-list class="w1" name="Track width" value="Track: 0.800 mm (31.50 mils)"></pick-list>${tools('width* |')}<pick-list class="w2" name="Via size" value="Via: use netclass sizes"></pick-list><tool-gap></tool-gap><layer-picker></layer-picker><tool-button class="swap" icon="pair"></tool-button><tool-gap></tool-gap><pick-list class="w3" name="Grid" value="0.5000 mm (19.69 mils)"></pick-list><tool-gap></tool-gap><pick-list class="w4" name="Zoom" value="Zoom 2.20"></pick-list></div>
    <main><nav>${tools('dots* dotsOver* polar inch mil mm* cross | angle | rats* rats2 | netHi dim | zoneFill* zoneLine | padsOut viaOut trackOut | layers*', true)}</nav>
    <board-canvas></board-canvas>
    <nav class="r">${tools('pointer* local | chip route+ tune+ via zone rule | line arc rect circle poly bezier image text textbox table dimension+ remove', true)}</nav>
    <div class="sash"><i></i></div><side-panel></side-panel></main>`; }
});
</script>
</body>
</html>
